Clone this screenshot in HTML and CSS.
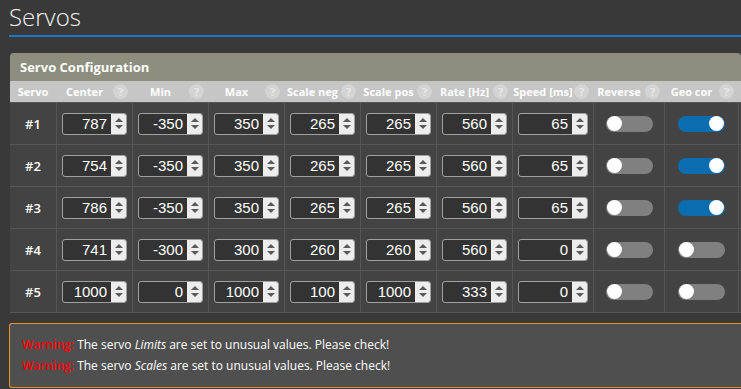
FILE: index.html
```html
<!DOCTYPE html>
<html lang="en">
<head>
    <meta charset="UTF-8">
    <title>Servos</title>
    <link rel="stylesheet" href="styles.css">
</head>
<body>
    <div class="page">
        <h1 class="title">Servos</h1>

        <div class="panel">
            <div class="panel-head">Servo Configuration</div>
            <div class="grid head-row">
                <div class="hcell"><span>Servo</span></div>
                <div class="hcell"><span>Center</span><i class="help">?</i></div>
                <div class="hcell"><span>Min</span><i class="help">?</i></div>
                <div class="hcell"><span>Max</span><i class="help">?</i></div>
                <div class="hcell"><span>Scale neg</span><i class="help">?</i></div>
                <div class="hcell"><span>Scale pos</span><i class="help">?</i></div>
                <div class="hcell"><span>Rate [Hz]</span><i class="help">?</i></div>
                <div class="hcell"><span>Speed [ms]</span><i class="help">?</i></div>
                <div class="hcell"><span>Reverse</span><i class="help">?</i></div>
                <div class="hcell"><span>Geo cor</span><i class="help">?</i></div>
                <div class="hcell"></div>
            </div>
            <div id="rows"></div>
        </div>

        <div class="warning">
            <p><span class="warn">Warning:</span> The servo <em>Limits</em> are set to unusual values. Please check!</p>
            <p><span class="warn">Warning:</span> The servo <em>Scales</em> are set to unusual values. Please check!</p>
        </div>
    </div>

    <script>
        // center, min, max, scale neg, scale pos, rate, speed, reverse, geo cor
        const servos = [
            [787, -350, 350, 265, 265, 560, 65, false, true],
            [754, -350, 350, 265, 265, 560, 65, false, true],
            [786, -350, 350, 265, 265, 560, 65, false, true],
            [741, -300, 300, 260, 260, 560, 0, false, false],
            [1000, 0, 1000, 100, 1000, 333, 0, false, false]
        ];

        const container = document.getElementById('rows');
        servos.forEach((s, i) => {
            const row = document.createElement('div');
            row.className = 'grid row';
            let html = `<div class="cell num">#${i + 1}</div>`;
            for (let k = 0; k < 7; k++) {
                html += `<div class="cell"><div class="spin"><span class="val">${s[k]}</span><span class="arrows"><b class="up"></b><b class="down"></b></span></div></div>`;
            }
            for (let k = 7; k < 9; k++) {
                html += `<div class="cell"><span class="toggle${s[k] ? ' on' : ''}"><b></b></span></div>`;
            }
            html += '<div class="cell"></div>';
            row.innerHTML = html;
            container.appendChild(row);
        });
    </script>
</body>
</html>
```

FILE: styles.css
```css
body {
    margin: 0;
    background-color: #393939;
    font-family: 'Open Sans', 'Liberation Sans', sans-serif;
    color: #fff;
    overflow: hidden;
}
.page {
    padding-left: 9px;
    width: 732px;
    overflow: hidden;
}
.title {
    margin: 0 0 16px;
    padding: 2px 0 3px;
    font-size: 24px;
    font-weight: 300;
    line-height: 30px;
    color: #f2f2f2;
    border-bottom: 2px solid #1d78c1;
}
.panel {
    margin-left: 1px;
    background-color: #434343;
}
.panel-head {
    height: 28px;
    line-height: 28px;
    padding-left: 10px;
    background-color: #8d8e7e;
    border-radius: 4px 4px 0 0;
    font-size: 13px;
    font-weight: 700;
}
.grid {
    display: grid;
    grid-template-columns: 46px 76px 76px 76px 76px 76px 76px 81px 71px 74px 1fr;
}
.head-row {
    height: 21px;
    background-color: #c6c6c6;
    border-bottom: 1px solid #555;
}
.hcell {
    display: flex;
    align-items: center;
    font-size: 11px;
    font-weight: 700;
}
.hcell span {
    flex: 1;
    text-align: center;
    white-space: nowrap;
}
.help {
    width: 15px;
    height: 15px;
    margin-right: 4px;
    border-radius: 50%;
    background-color: #d4d4d4;
    color: #e8e8e8;
    font-style: normal;
    font-size: 11px;
    line-height: 15px;
    text-align: center;
}
.row {
    height: 41px;
    border-bottom: 1px solid #565656;
}
.cell {
    display: flex;
    align-items: center;
    justify-content: center;
    border-left: 1px solid #565656;
}
.cell.num {
    border-left: none;
    font-size: 13px;
    font-weight: 600;
}
.spin {
    display: flex;
    width: calc(100% - 10px);
    height: 22px;
    box-sizing: border-box;
    border: 1px solid #a0a0a0;
    border-radius: 3px;
    background-color: #333;
    overflow: hidden;
}
.val {
    flex: 1;
    padding-right: 4px;
    text-align: right;
    font-family: 'Liberation Sans', Arial, sans-serif;
    font-size: 15px;
    line-height: 20px;
}
.arrows {
    display: flex;
    flex-direction: column;
    align-items: center;
    justify-content: center;
    gap: 3px;
    width: 15px;
    background-color: #ededed;
}
.arrows b {
    width: 0;
    height: 0;
    border-left: 4px solid transparent;
    border-right: 4px solid transparent;
}
.arrows .up {
    border-bottom: 4px solid #5a5a5a;
}
.arrows .down {
    border-top: 4px solid #5a5a5a;
}
.toggle {
    display: flex;
    align-items: center;
    width: 47px;
    height: 16px;
    padding: 0 1px;
    box-sizing: border-box;
    border-radius: 8px;
    background-color: #808080;
}
.toggle b {
    width: 15px;
    height: 15px;
    border-radius: 50%;
    background-color: #fff;
}
.toggle.on {
    justify-content: flex-end;
    background-color: #0b6caf;
}
.warning {
    margin-top: 10px;
    padding: 11px 12px 10px;
    background-color: #4f4f4f;
    border: 1px solid #e8922c;
    border-right: none;
    border-radius: 3px 0 0 3px;
    font-size: 12px;
    line-height: 20px;
}
.warning p {
    margin: 0 0 1px;
    white-space: nowrap;
}
.warn {
    color: #ff0000;
    font-weight: 600;
}
```
